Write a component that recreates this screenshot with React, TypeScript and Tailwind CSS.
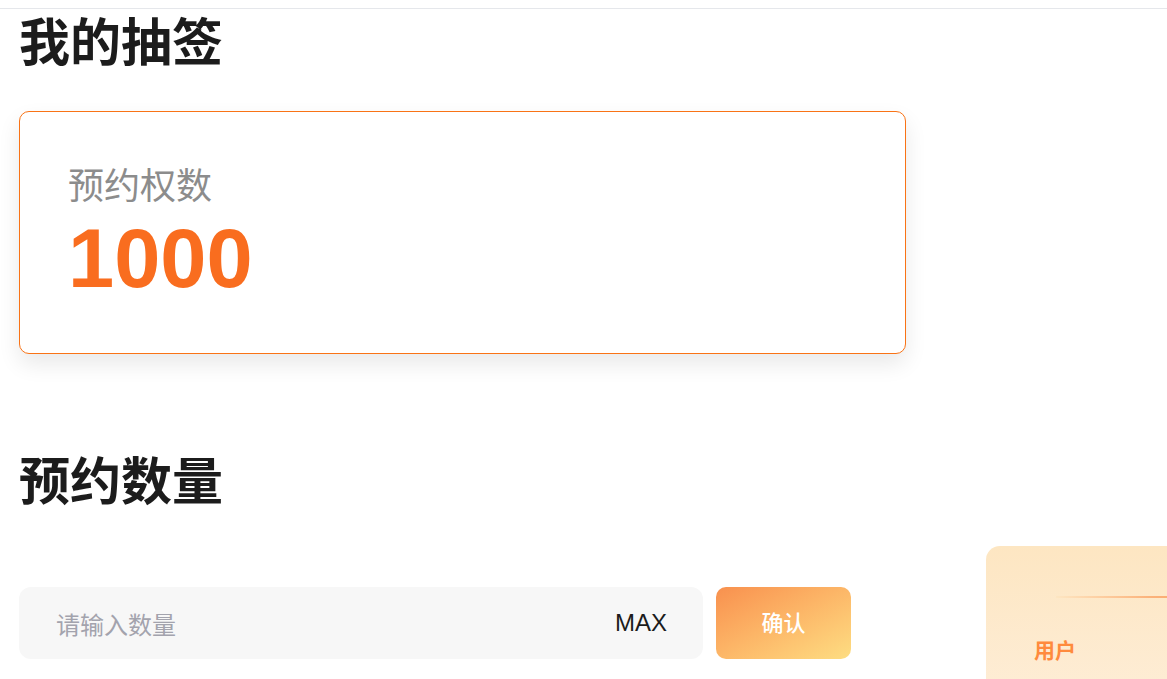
const cjk = { fontFamily: '"Noto Sans CJK SC", "Noto Sans", sans-serif' };

function SideTab() {
  return (
    <div className="absolute left-[986px] top-[546px] h-[200px] w-[260px] rounded-tl-[14px] bg-gradient-to-b from-[#fde6c2] to-[#feefdc]">
      <div className="mt-[50px] ml-[70px] h-[2px] bg-gradient-to-r from-[#fde6c2] via-[#fbb27a] to-[#f99656]" />
      <p className="mt-[41px] ml-[48px] text-[21px] font-bold leading-[21px] text-[#ff8a3d]" style={cjk}>
        用户
      </p>
    </div>
  );
}

export default function App() {
  return (
    <div className="relative h-[679px] w-full overflow-hidden bg-white" style={cjk}>
      <div className="h-[9px] border-b border-[#e5e7eb]" />
      <div className="px-[19px]">
        <h1 className="mt-[4px] text-[51px] font-bold leading-[52px] text-[#1c1c1c]">我的抽签</h1>

        <div className="mt-[46px] w-[887px] rounded-[10px] border border-[#f97316] bg-white pt-[53px] pb-[51px] pl-[48px] shadow-[0_10px_22px_rgba(0,0,0,0.09)]">
          <p className="text-[36px] leading-[36px] text-[#8c8c8c]">预约权数</p>
          <p
            className="mt-[15px] text-[83px] font-bold leading-[86px] text-[#f96d1f]"
            style={{ fontFamily: '"Liberation Sans", Arial, sans-serif' }}
          >
            1000
          </p>
        </div>

        <h2 className="mt-[98px] text-[51px] font-bold leading-[52px] text-[#1c1c1c]">预约数量</h2>

        <div className="mt-[83px] flex gap-[13px]">
          <div className="flex h-[72px] w-[684px] items-center justify-between rounded-[12px] bg-[#f7f7f7] pl-[37px] pr-[36px]">
            <input
              placeholder="请输入数量"
              className="w-[300px] bg-transparent text-[24px] leading-[24px] text-[#1c1c1c] outline-none placeholder:text-[#a3a3ad]"
              style={cjk}
            />
            <span
              className="text-[24px] leading-[24px] text-[#1c1c1c]"
              style={{ fontFamily: '"Liberation Sans", Arial, sans-serif' }}
            >
              MAX
            </span>
          </div>
          <button className="flex h-[72px] w-[135px] items-center justify-center rounded-[10px] bg-gradient-to-br from-[#f8904e] to-[#fddd82] pb-[4px] text-[22px] font-medium leading-[22px] text-white">
            确认
          </button>
        </div>
      </div>
      <SideTab />
    </div>
  );
}
